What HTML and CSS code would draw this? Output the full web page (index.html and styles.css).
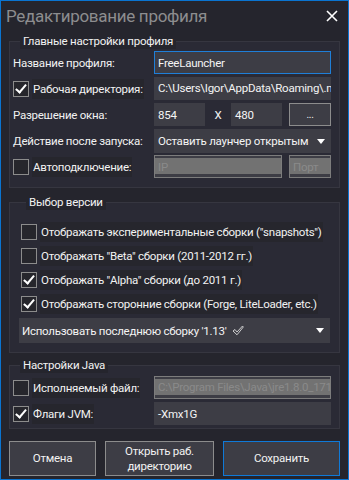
FILE: index.html
```html
<!DOCTYPE html>
<html lang="ru">
<head>
    <meta charset="UTF-8">
    <meta name="viewport" content="width=device-width, initial-scale=1.0">
    <title>Редактирование профиля</title>
    <link rel="stylesheet" href="styles.css">
</head>
<body>

<div class="window">
    <div class="titlebar">
        <span class="title">Редактирование профиля</span>
        <svg class="close" width="12" height="12" viewBox="0 0 12 12">
            <path d="M1 1 L11 11 M11 1 L1 11" stroke="#fff" stroke-width="1.6" fill="none"/>
        </svg>
    </div>

    <fieldset class="group main">
        <legend>Главные настройки профиля</legend>
        <div class="grid">
            <span class="label">Название профиля:</span>
            <div class="field focus">FreeLauncher</div>

            <span class="check-label"><span class="box checked"></span><span class="cl-text">Рабочая директория:</span></span>
            <div class="field clip">C:\Users\Igor\AppData\Roaming\.minecraft</div>

            <span class="label">Разрешение окна:</span>
            <div class="res">
                <div class="field small">854</div>
                <span class="x">X</span>
                <div class="field small">480</div>
                <div class="btn-dots">...</div>
            </div>

            <span class="label">Действие после запуска:</span>
            <div class="field select">Оставить лаунчер открытым<span class="arrow"></span></div>

            <span class="check-label"><span class="box"></span><span class="cl-text">Автоподключение:</span></span>
            <div class="res">
                <div class="field disabled ip">IP</div>
                <div class="field disabled port">Порт</div>
            </div>
        </div>
    </fieldset>

    <fieldset class="group versions">
        <legend>Выбор версии</legend>
        <div class="opt"><span class="box"></span><span class="cl-text">Отображать экспериментальные сборки ("snapshots")</span></div>
        <div class="opt"><span class="box"></span><span class="cl-text">Отображать "Beta" сборки (2011-2012 гг.)</span></div>
        <div class="opt"><span class="box checked"></span><span class="cl-text">Отображать "Alpha" сборки (до 2011 г.)</span></div>
        <div class="opt"><span class="box checked"></span><span class="cl-text">Отображать сторонние сборки (Forge, LiteLoader, etc.)</span></div>
        <div class="field select wide">Использовать последнюю сборку '1.13'
            <svg class="ok" width="12" height="11" viewBox="0 0 12 11">
                <path d="M1 6 L3 4.5 L5 7 L10.5 1 L11.3 2 L5 9.8 Z" stroke="#ddd" stroke-width="0.9" fill="none"/>
            </svg>
            <span class="arrow"></span>
        </div>
    </fieldset>

    <fieldset class="group java">
        <legend>Настройки Java</legend>
        <div class="grid">
            <span class="check-label"><span class="box"></span><span class="cl-text">Исполняемый файл:</span></span>
            <div class="field disabled clip">C:\Program Files\Java\jre1.8.0_171\bin\javaw.exe</div>

            <span class="check-label"><span class="box checked"></span><span class="cl-text">Флаги JVM:</span></span>
            <div class="field">-Xmx1G</div>
        </div>
    </fieldset>

    <div class="buttons">
        <div class="btn cancel">Отмена</div>
        <div class="btn open">Открыть раб.<br>директорию</div>
        <div class="btn save">Сохранить</div>
    </div>
</div>

</body>
</html>
```

FILE: styles.css
```css
body {
    margin: 0;
    padding: 0;
    background-color: #25252d;
    font-family: Roboto, "Noto Sans", sans-serif;
    font-size: 11.5px;
    letter-spacing: -0.25px;
    color: #f2f2f2;
}
.window {
    width: 349px;
    height: 480px;
    box-sizing: border-box;
    border: 1px solid #0a74d0;
    background-color: #25252d;
}
.titlebar {
    height: 32px;
    display: flex;
    align-items: center;
    justify-content: space-between;
    padding: 0 10px 0 5px;
}
.title {
    font-size: 17px;
    letter-spacing: -0.3px;
    color: #8d8d8f;
    margin-top: -3px;
}
.close {
    margin-top: -3px;
}
.group {
    margin: 0 8px;
    border: 1px solid #363640;
    background-color: #2a2a35;
    padding: 2px 8px 9px 3px;
    min-width: 0;
}
.group legend {
    margin-left: 7px;
    padding: 0 3px;
    line-height: 16px;
    background-color: #25252d;
    color: #f2f2f2;
}
.grid {
    display: grid;
    grid-template-columns: 141px 1fr;
    grid-auto-rows: 23px;
    row-gap: 3px;
    align-items: center;
}
.label {
    white-space: nowrap;
}
.check-label, .opt {
    display: flex;
    align-items: center;
    gap: 3px;
    white-space: nowrap;
}
.cl-text {
    background-color: #26262d;
    padding: 2px 1px;
    line-height: 16px;
}
.box {
    width: 14px;
    height: 14px;
    border: 1px solid #8c8c8c;
    background-color: #26262c;
    position: relative;
    flex: none;
}
.box.checked::after {
    content: "";
    position: absolute;
    left: 4px;
    top: 0px;
    width: 4px;
    height: 9px;
    border: solid #fff;
    border-width: 0 2px 2px 0;
    transform: rotate(40deg);
}
.field {
    height: 23px;
    box-sizing: border-box;
    background-color: #3d3d45;
    display: flex;
    align-items: center;
    padding: 0 4px;
    white-space: nowrap;
    overflow: hidden;
    color: #f4f4f4;
}
.field.focus {
    border: 1px solid #1f7fd8;
    padding: 0 3px;
}
.field.clip {
    text-overflow: clip;
    display: block;
    line-height: 23px;
}
.field.select {
    height: 24px;
    position: relative;
    padding-right: 20px;
}
.arrow {
    position: absolute;
    right: 6px;
    top: 10px;
    border-left: 4px solid transparent;
    border-right: 4px solid transparent;
    border-top: 5px solid #fff;
}
.field.disabled {
    background-color: #727272;
    border: 1px solid #7c7c7c;
    box-shadow: inset 0 2px 0 #3d3d45, inset 0 -3px 0 #3d3d45;
    color: #8a8a8a;
    padding: 0 3px;
}
.field.disabled.clip {
    line-height: 21px;
}
.res {
    display: flex;
    align-items: center;
    height: 23px;
}
.field.small {
    width: 51px;
}
.x {
    width: 26px;
    text-align: center;
}
.btn-dots {
    margin-left: 7px;
    flex: 1;
    height: 23px;
    box-sizing: border-box;
    border: 1px solid #8c8c8c;
    background-color: #3d3d45;
    display: flex;
    align-items: center;
    justify-content: center;
    font-size: 10px;
    line-height: 1;
}
.field.ip {
    width: 128px;
}
.field.port {
    margin-left: 7px;
    flex: 1;
}
.group.versions {
    margin-top: 6px;
    padding: 10px 9px 9px 9px;
}
.opt {
    height: 24px;
    margin-left: 2px;
}
.field.wide {
    margin-top: 2px;
    height: 25px;
    padding-left: 3px;
}
.ok {
    margin-left: 5px;
}
.group.java {
    margin-top: 4px;
    padding: 3px 8px 3px 3px;
}
.buttons {
    display: flex;
    margin: 12px 8px 0 8px;
    gap: 9px;
}
.btn {
    height: 35px;
    box-sizing: border-box;
    border: 1px solid #8c8c8c;
    background-color: #3d3d45;
    display: flex;
    align-items: center;
    justify-content: center;
    text-align: center;
    line-height: 15px;
}
.btn.cancel {
    width: 87px;
}
.btn.open {
    width: 109px;
}
.btn.save {
    flex: 1;
    border-color: #0f7ad8;
}
```
